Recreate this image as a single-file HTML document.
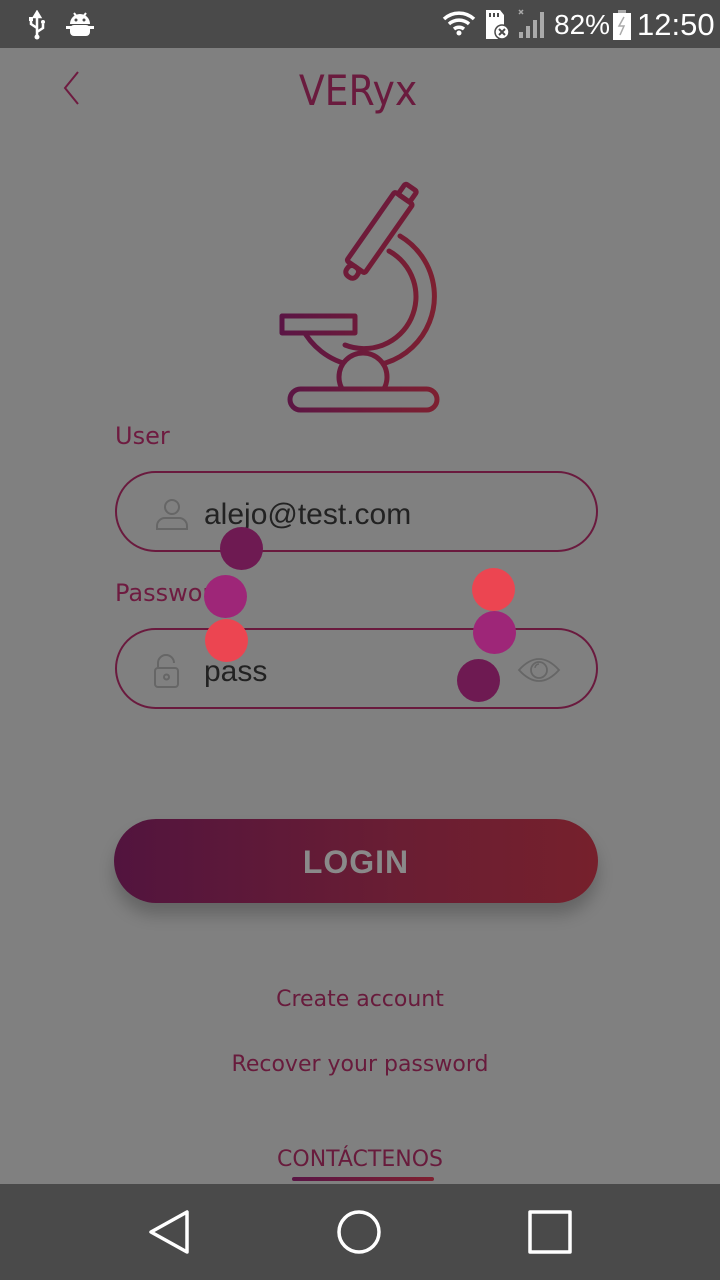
<!DOCTYPE html>
<html><head><meta charset="utf-8"><style>
*{margin:0;padding:0;box-sizing:border-box}
body{width:720px;height:1280px;background:#808080;position:relative;overflow:hidden;font-family:"Liberation Sans","DejaVu Sans",sans-serif}
.abs{position:absolute}
.sb{left:0;top:0;width:720px;height:48px;background:#4a4a4a;color:#fff}
.nav{left:0;top:1184px;width:720px;height:96px;background:#4a4a4a}
.lbl{color:#6e1b40;font-size:24px;font-family:"DejaVu Sans",sans-serif}
.pill{left:115px;width:483px;height:81px;border-radius:41px;border:2px solid #6a1a3e}
.val{font-size:30px;color:#222;font-family:"Liberation Sans",sans-serif}
.dot{width:43px;height:43px;border-radius:50%}
.link{left:0;width:720px;text-align:center;font-size:22px;color:#681b3c;font-family:"DejaVu Sans",sans-serif}
</style></head><body>
<div class="abs sb">
 <svg class="abs" style="left:26px;top:10px" width="22" height="30" viewBox="0 0 22 30"><path d="M11 2v26M11 2l-3 5h6zM11 18l-6-4v-4M11 22l6-4v-4" stroke="#fff" stroke-width="2.5" fill="none"/><rect x="3" y="7" width="4" height="4" fill="#fff"/><circle cx="17" cy="12" r="2" fill="#fff"/><circle cx="11" cy="27" r="2.5" fill="#fff"/></svg>
 <svg class="abs" style="left:66px;top:10px" width="28" height="30" viewBox="0 0 28 30"><path d="M4 14a10 10 0 0 1 20 0z" fill="#fff"/><rect x="4" y="15" width="20" height="11" rx="4" fill="#fff"/><rect x="0" y="16" width="28" height="3" fill="#fff"/><path d="M8 3l3 4M20 3l-3 4" stroke="#fff" stroke-width="2"/><circle cx="10" cy="10" r="1.5" fill="#4a4a4a"/><circle cx="18" cy="10" r="1.5" fill="#4a4a4a"/></svg>
 <svg class="abs" style="left:442px;top:10px" width="34" height="26" viewBox="0 0 34 26"><path d="M2 9a22 22 0 0 1 30 0M7 14a15 15 0 0 1 20 0M12 19a8 8 0 0 1 10 0" stroke="#fff" stroke-width="3.5" fill="none"/><circle cx="17" cy="23" r="2.5" fill="#fff"/></svg>
 <svg class="abs" style="left:486px;top:10px" width="26" height="30" viewBox="0 0 26 30"><path d="M0 0h14l4 5v12H0z" fill="#fff"/><rect x="3" y="3" width="2" height="4" fill="#4a4a4a"/><rect x="7" y="3" width="2" height="4" fill="#4a4a4a"/><rect x="11" y="3" width="2" height="4" fill="#4a4a4a"/><path d="M0 17h12v12H0z" fill="#fff"/><circle cx="16" cy="22" r="7" fill="#fff" stroke="#4a4a4a" stroke-width="1.5"/><path d="M13 19l6 6M19 19l-6 6" stroke="#4a4a4a" stroke-width="2"/></svg>
 <svg class="abs" style="left:517px;top:8px" width="30" height="32" viewBox="0 0 30 32"><path d="M2 2l4 4M6 2l-4 4" stroke="#aaa" stroke-width="1.5"/><rect x="2" y="24" width="4" height="6" fill="#aaa"/><rect x="9" y="18" width="4" height="12" fill="#aaa"/><rect x="16" y="12" width="4" height="18" fill="#aaa"/><rect x="23" y="4" width="4" height="26" fill="#aaa"/></svg>
 <div class="abs" style="left:554px;top:9px;font-size:28px;font-family:'Liberation Sans',sans-serif">82%</div>
 <svg class="abs" style="left:612px;top:10px" width="20" height="30" viewBox="0 0 20 30"><rect x="6" y="0" width="8" height="3" fill="#aaa"/><rect x="1" y="3" width="18" height="27" fill="#fff"/><path d="M12 7l-5 9h5l-4 9" stroke="#aaa" stroke-width="1.5" fill="none"/></svg>
 <div class="abs" style="left:637px;top:7px;font-size:31px;font-family:'Liberation Sans',sans-serif">12:50</div>
</div>
<svg class="abs" style="left:60px;top:70px" width="24" height="36" viewBox="0 0 24 36"><path d="M18 2L5 18l13 16" stroke="#6e1b40" stroke-width="2" fill="none"/></svg>
<div class="abs" style="left:0;top:66px;width:716px;text-align:center;font-size:42px;color:#6a1b3e;font-family:'DejaVu Sans Condensed','Liberation Sans',sans-serif">VERyx</div>
<svg class="abs" style="left:0;top:0" width="720" height="430" viewBox="0 0 720 430">
 <defs><linearGradient id="g" x1="280" y1="0" x2="440" y2="0" gradientUnits="userSpaceOnUse"><stop offset="0" stop-color="#5a1545"/><stop offset="1" stop-color="#7e2030"/></linearGradient></defs>
 <g stroke="url(#g)" stroke-width="5" fill="none" stroke-linejoin="round" stroke-linecap="round">
  <path d="M400 236 A70 70 0 1 1 302 328"/>
  <path d="M389 251 A52 52 0 0 1 345 345"/>
  <g transform="rotate(35 378 235)"><rect x="367" y="190" width="22" height="84" rx="2" fill="#808080"/><rect x="371" y="177" width="14" height="13" rx="2"/><rect x="372" y="274" width="12" height="12" rx="5"/></g>
  <rect x="282" y="316" width="73" height="17" fill="#808080"/>
  <circle cx="363" cy="377" r="24" fill="#808080"/>
  <rect x="290" y="389" width="147" height="21" rx="10.5" fill="#808080"/>
 </g>
</svg>
<div class="abs lbl" style="left:115px;top:422px">User</div>
<div class="abs pill" style="top:471px"></div>
<svg class="abs" style="left:155px;top:497px" width="34" height="34" viewBox="0 0 34 34"><circle cx="17" cy="10" r="7" stroke="#666" stroke-width="2" fill="none"/><path d="M2 32v-3a8 8 0 0 1 8-8h14a8 8 0 0 1 8 8v3z" stroke="#666" stroke-width="2" fill="none"/></svg>
<div class="abs val" style="left:204px;top:498px">alejo@test.com</div>
<div class="abs lbl" style="left:115px;top:579px">Password</div>
<div class="abs pill" style="top:628px"></div>
<svg class="abs" style="left:152px;top:653px" width="30" height="36" viewBox="0 0 30 36"><path d="M6 15V10a8 8 0 0 1 16 0" stroke="#666" stroke-width="2" fill="none"/><rect x="3" y="15" width="23" height="19" rx="3" stroke="#666" stroke-width="2" fill="none"/><circle cx="14.5" cy="24" r="2.5" stroke="#666" stroke-width="2" fill="none"/></svg>
<div class="abs val" style="left:204px;top:655px">pass</div>
<svg class="abs" style="left:517px;top:656px" width="44" height="28" viewBox="0 0 44 28"><path d="M2 14Q22 -8 42 14Q22 36 2 14z" stroke="#666" stroke-width="1.8" fill="none"/><circle cx="22" cy="14" r="8" stroke="#666" stroke-width="1.8" fill="none"/><path d="M18 12a4 4 0 0 1 4-4" stroke="#666" stroke-width="1.5" fill="none"/></svg>
<div class="abs dot" style="left:220px;top:527px;background:#6e1a52"></div>
<div class="abs dot" style="left:204px;top:575px;background:#9e2678"></div>
<div class="abs dot" style="left:205px;top:619px;background:#ec4551"></div>
<div class="abs dot" style="left:472px;top:568px;background:#ec4551"></div>
<div class="abs dot" style="left:473px;top:611px;background:#9e2678"></div>
<div class="abs dot" style="left:457px;top:659px;background:#6e1a52"></div>
<div class="abs" style="left:114px;top:819px;width:484px;height:84px;border-radius:42px;background:linear-gradient(90deg,#52143e,#6a1e33 60%,#76202c);box-shadow:0 12px 16px rgba(0,0,0,.22);color:#8a8a8a;font-size:32px;font-weight:bold;text-align:center;line-height:86px;font-family:'Liberation Sans',sans-serif;letter-spacing:1px">LOGIN</div>
<div class="abs link" style="top:987px">Create account</div>
<div class="abs link" style="top:1052px">Recover your password</div>
<div class="abs link" style="top:1147px;font-size:22px">CONTÁCTENOS</div>
<div class="abs" style="left:292px;top:1177px;width:142px;height:4px;border-radius:2px;background:linear-gradient(90deg,#5a1545,#7e2030)"></div>
<div class="abs nav">
 <svg class="abs" style="left:0;top:0" width="720" height="96" viewBox="0 0 720 96"><g stroke="#fff" stroke-width="3.5" fill="none" stroke-linejoin="round"><path d="M187 28v40l-36-20z"/><circle cx="359" cy="48" r="20"/><rect x="530" y="28" width="40" height="40"/></g></svg>
</div>
</body></html>
